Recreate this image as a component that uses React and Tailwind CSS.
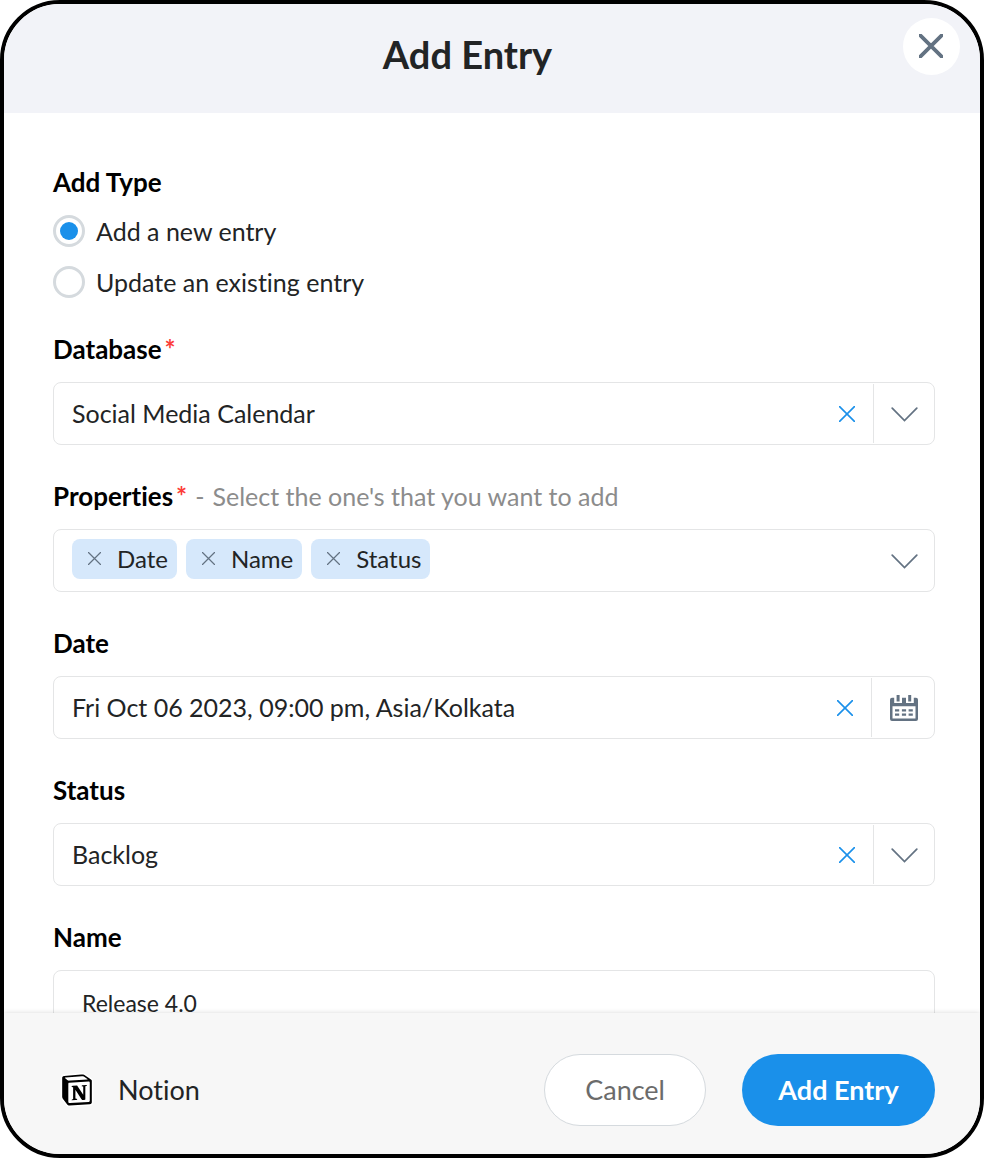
const fieldBox = 'flex min-h-[63px] items-center rounded-lg border border-[#e4e5e6] bg-white';
const valueText = 'min-w-0 flex-1 appearance-none bg-transparent pb-0.5 pl-[18px] text-[25px] leading-8 text-[#222425] outline-none';
const labelText = 'block text-[26px] leading-[30px] font-bold text-black';
const fieldStack = 'flex flex-col gap-[18px]';

function Cross({ className, width }) {
  return (
    <svg viewBox="0 0 16 16" className={className} fill="none" stroke="currentColor" strokeWidth={width} strokeLinecap="round" aria-hidden="true">
      <path d="M.6.6l14.8 14.8M15.4.6L.6 15.4" />
    </svg>
  );
}

function Chevron() {
  return (
    <svg viewBox="0 0 27 15" className="h-[15px] w-[27px]" fill="none" stroke="currentColor" strokeWidth="1.7" strokeLinecap="round" aria-hidden="true">
      <path d="M1.200 1.200l12.300 12.300L25.800 1.200" />
    </svg>
  );
}

function CalendarIcon() {
  return (
    <svg viewBox="0 0 28 26" className="h-[26px] w-7" fill="currentColor" aria-hidden="true">
      <path fillRule="evenodd" d="M2 2.800h2.200V8H12V2.800h4V8h7.800V2.800H26a2 2 0 0 1 2 2V24a2 2 0 0 1-2 2H2a2 2 0 0 1-2-2V4.800a2 2 0 0 1 2-2zM2.500 11.300v12.200h23V11.300z" />
      <path d="M6.600 0h3v6.500h-3zM18.200 0h3v6.500h-3z" />
      <path d="M5 14.200h4.200v2.300H5zM11.900 14.200h4.200v2.300h-4.200zM18.600 14.200h4.200v2.300h-4.200zM5 18.400h4.200v2.300H5zM11.900 18.400h4.200v2.300h-4.200zM18.600 18.400h4.200v2.300h-4.200z" />
    </svg>
  );
}

function NotionLogo() {
  return (
    <svg viewBox="-1.200 -1.200 26.400 26.400" className="size-[34px]" aria-hidden="true">
      <path
        d="M1.936 1.035l13.310-.980c1.634-.140 2.055-.047 3.082.700l4.249 2.986c.700.513.934.653.934 1.213v16.378c0 1.026-.373 1.634-1.680 1.726l-15.458.934c-.980.047-1.448-.093-1.962-.747l-3.129-4.060c-.560-.747-.793-1.306-.793-1.960V2.667c0-.839.374-1.540 1.447-1.632z"
        fill="#000"
        stroke="#fff"
        strokeWidth="2.400"
        paintOrder="stroke"
      />
      <path fill="#fff" d="M4.459 4.208c.746.606 1.026.560 2.428.466l13.215-.793c.280 0 .047-.280-.046-.326L17.860 1.968c-.420-.326-.981-.700-2.055-.607L3.010 2.295c-.466.046-.560.280-.374.466z" />
      <path fill="#fff" d="M5.252 7.288v13.904c0 .747.373 1.027 1.214.980l14.523-.840c.841-.046.935-.560.935-1.167V6.354c0-.606-.233-.933-.748-.887l-15.177.887c-.560.047-.747.327-.747.934z" />
      <path fill="#000" d="M19.589 8.033c.093.420 0 .840-.420.888l-.700.140v10.264c-.608.327-1.168.514-1.635.514-.748 0-.935-.234-1.495-.933l-4.577-7.186v6.952L12.210 19s0 .840-1.168.840l-3.222.186c-.093-.186 0-.653.327-.746l.840-.233V9.854L7.822 9.760c-.094-.420.140-1.026.793-1.073l3.456-.233 4.764 7.279v-6.440l-1.215-.139c-.093-.514.280-.887.747-.933z" />
    </svg>
  );
}

function ClearButton({ label }) {
  return (
    <button type="button" aria-label={label} className="grid h-10 w-[52px] place-items-center text-[#1a90ea]">
      <Cross className="size-4" width="1.6" />
    </button>
  );
}

function Divided({ label, children }) {
  return (
    <button type="button" aria-label={label} className="my-px grid w-[61px] place-items-center self-stretch border-l border-[#e4e5e6] pt-px pl-px text-[#637282]">
      {children}
    </button>
  );
}

function SelectField({ id, label, required, options }) {
  return (
    <div className={fieldStack}>
      <label htmlFor={id} className={labelText}>
        {label}
        {required && <span className="ml-[3px] text-[#fc3d39]">*</span>}
      </label>
      <div className={fieldBox}>
        <select id={id} className={valueText}>
          {options.map((option) => (
            <option key={option}>{option}</option>
          ))}
        </select>
        <ClearButton label={`Clear ${label}`} />
        <Divided label={`Open ${label}`}>
          <Chevron />
        </Divided>
      </div>
    </div>
  );
}

function Radio({ label, checked }) {
  return (
    <label className="flex items-center gap-[11px] text-[25px] leading-8 text-[#222425]">
      <input
        type="radio"
        name="add-type"
        defaultChecked={checked}
        className="grid size-8 appearance-none place-items-center rounded-full border-3 border-[#d5dade] bg-white before:size-[18px] before:rounded-full checked:before:bg-[#1a90ea]"
      />
      {label}
    </label>
  );
}

export default function App() {
  return (
    <div className="bg-white font-[Lato,sans-serif] [font-variant-ligatures:none]">
      <form className="flex h-screen flex-col overflow-hidden rounded-[60px] border-4 border-black bg-white">
        <header className="flex h-[109px] shrink-0 items-start bg-[#f2f3f8] pr-5">
          <h1 className="flex-1 pt-[26px] pl-7 text-center text-[38px] leading-[48px] font-bold text-[#222425]">Add Entry</h1>
          <button type="button" aria-label="Close" className="mt-[14px] grid size-[57px] place-items-center rounded-full bg-white pr-px pb-px text-[#637282]">
            <Cross className="size-6" width="2.5" />
          </button>
        </header>

        <main className="flex min-h-0 flex-1 flex-col gap-9 overflow-hidden pt-[54px] pr-[45px] pl-[49px]">
          <fieldset>
            <legend className={labelText}>Add Type</legend>
            <div className="flex flex-col gap-[19px] pt-[18px]">
              <Radio label="Add a new entry" checked />
              <Radio label="Update an existing entry" />
            </div>
          </fieldset>

          <SelectField id="database" label="Database" required options={['Social Media Calendar']} />

          <div className={fieldStack}>
            <h2 className={labelText}>
              Properties
              <span className="ml-[3px] text-[#fc3d39]">*</span>
              <span className="ml-2 text-[25px] font-normal text-[#8c8c8c]">
                -<span className="ml-2">Select the one's that you want to add</span>
              </span>
            </h2>
            <div className={fieldBox}>
              <ul className="flex flex-1 gap-[9px] pb-1 pl-[18px]">
                {['Date', 'Name', 'Status'].map((name) => (
                  <li key={name} className="flex h-10 items-center gap-4 rounded-lg bg-[#d6e8fb] pr-[9px] pl-4 text-2xl text-[#222425]">
                    <button type="button" aria-label={`Remove ${name}`} className="text-[#637282]">
                      <Cross className="size-[13px]" width="1.5" />
                    </button>
                    {name}
                  </li>
                ))}
              </ul>
              <button type="button" aria-label="Open Properties" className="grid w-[60px] place-items-center self-stretch pt-px pl-px text-[#637282]">
                <Chevron />
              </button>
            </div>
          </div>

          <div className={fieldStack}>
            <label htmlFor="date" className={labelText}>Date</label>
            <div className={fieldBox}>
              <input id="date" type="text" defaultValue="Fri Oct 06 2023, 09:00 pm, Asia/Kolkata" className={valueText} />
              <ClearButton label="Clear Date" />
              <button type="button" aria-label="Open calendar" className="my-px grid w-[63px] place-items-center self-stretch border-l border-[#e4e5e6] pl-0.5 text-[#637282]">
                <CalendarIcon />
              </button>
            </div>
          </div>

          <SelectField id="status" label="Status" options={['Backlog']} />

          <div className={fieldStack}>
            <label htmlFor="name" className={labelText}>Name</label>
            <textarea id="name" rows="3" defaultValue="Release 4.0" className="block resize-none rounded-lg border border-[#e4e5e6] bg-white px-7 py-4 text-[23px] leading-8 text-[#222425] outline-none" />
          </div>
        </main>

        <footer className="flex h-[141px] shrink-0 items-center bg-[#f7f7f7] pt-3 pr-[45px] pl-14 shadow-[0_0_5px_rgba(0,0,0,0.16)]">
          <NotionLogo />
          <span className="ml-6 flex-1 text-[27px] leading-9 text-[#222425]">Notion</span>
          <div className="flex gap-9">
            <button type="button" className="h-[72px] rounded-full border border-[#d5dade] bg-white px-10 pt-0.5 text-[27px] text-[#6b6b6b]">Cancel</button>
            <button type="submit" className="h-[72px] min-w-[193px] rounded-full bg-[#1a90ea] px-9 pt-0.5 text-[27px] font-bold text-white">Add Entry</button>
          </div>
        </footer>
      </form>
    </div>
  );
}
